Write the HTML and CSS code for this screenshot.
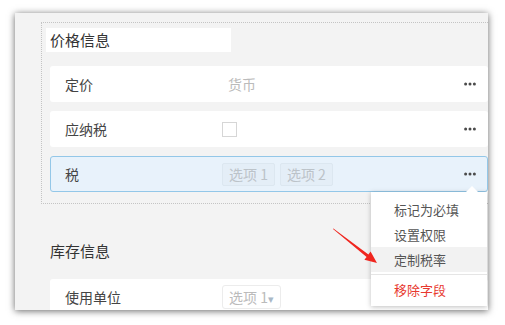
FILE: index.html
```html
<!DOCTYPE html>
<html lang="zh-CN">
<head>
  <meta charset="UTF-8">
  <title>字段设置</title>
  <link rel="stylesheet" href="styles.css">
</head>
<body>
  <div class="frame">
    <div class="group">
      <div class="group-title">价格信息</div>
      <div class="field">
        <span class="label">定价</span>
        <span class="value"><span class="placeholder">货币</span></span>
        <svg class="more" width="12" height="4" viewBox="0 0 12 4"><circle cx="1.6" cy="2" r="1.5"/><circle cx="6" cy="2" r="1.5"/><circle cx="10.4" cy="2" r="1.5"/></svg>
      </div>
      <div class="field">
        <span class="label">应纳税</span>
        <span class="value"><span class="checkbox"></span></span>
        <svg class="more" width="12" height="4" viewBox="0 0 12 4"><circle cx="1.6" cy="2" r="1.5"/><circle cx="6" cy="2" r="1.5"/><circle cx="10.4" cy="2" r="1.5"/></svg>
      </div>
      <div class="field active">
        <span class="label">税</span>
        <span class="value">
          <span class="tag">选项 1</span>
          <span class="tag">选项 2</span>
        </span>
        <svg class="more" width="12" height="4" viewBox="0 0 12 4"><circle cx="1.6" cy="2" r="1.5"/><circle cx="6" cy="2" r="1.5"/><circle cx="10.4" cy="2" r="1.5"/></svg>
      </div>
    </div>

    <div class="section-title">库存信息</div>
    <div class="field">
      <span class="label">使用单位</span>
      <span class="value"><span class="select">选项 1<span class="caret">▾</span></span></span>
    </div>

    <!-- ===== Field menu ===== -->
    <div class="menu">
      <div class="menu-item">标记为必填</div>
      <div class="menu-item">设置权限</div>
      <div class="menu-item hover">定制税率</div>
      <div class="menu-sep"></div>
      <div class="menu-item danger">移除字段</div>
    </div>
  </div>

  <svg class="arrow" width="505" height="325" viewBox="0 0 505 325">
    <polygon fill="#f0261f" points="333,229 366.6,257 364.4,259.8 377,263 370.6,251.6 368.4,254.5 333.4,228.4"/>
  </svg>
</body>
</html>
```

FILE: styles.css
```css
body {
  font-family: "Noto Sans CJK SC", "Noto Sans", sans-serif;
  background-color: #fff;
  margin: 0;
  width: 505px;
  height: 325px;
  overflow: hidden;
  position: relative;
}
.frame {
  position: relative;
  margin: 13px 0 0 15px;
  width: 473px;
  height: 297px;
  background-color: #f3f3f3;
  box-shadow: 0 1px 7px rgba(0, 0, 0, 0.6);
  overflow: hidden;
}
.group {
  margin: 9px -12px 0 26px;
  padding: 5px 0 11px 4px;
  border: 1px dotted #c4c4c4;
}
.group-title {
  width: 181px;
  height: 24px;
  line-height: 24px;
  padding-left: 4px;
  background-color: #fff;
  font-size: 15px;
  color: #333;
  margin-bottom: 14px;
}
.field {
  display: flex;
  align-items: center;
  height: 36px;
  background-color: #fff;
  border: 1px solid transparent;
  border-radius: 3px;
  margin: 0 0 9px 4px;
  box-sizing: border-box;
  width: 438px;
  padding: 0 11px 0 14px;
  font-size: 14px;
  color: #444;
}
.field.active {
  background-color: #e8f2fb;
  border-color: #93c7e8;
  margin-bottom: 0;
}
.label {
  width: 157px;
}
.value {
  flex-grow: 1;
  display: flex;
  align-items: center;
  gap: 5px;
}
.placeholder {
  padding-left: 6px;
  color: #bbb;
}
.checkbox {
  width: 13px;
  height: 13px;
  border: 1px solid #d6d6d6;
}
.tag {
  height: 23px;
  line-height: 21px;
  box-sizing: border-box;
  padding: 0 6px;
  border: 1px solid #dce7f0;
  background-color: #e4eef7;
  color: #bcc3c9;
  border-radius: 2px;
}
.more {
  fill: #4a4a4a;
}
.section-title {
  margin: 35px 0 0 35px;
  font-size: 15px;
  color: #333;
  height: 24px;
  line-height: 24px;
}
.frame > .field {
  margin: 16px 0 0 35px;
}
.select {
  height: 24px;
  line-height: 22px;
  box-sizing: border-box;
  padding: 0 6px;
  border: 1px solid #ececec;
  border-radius: 3px;
  color: #bbb;
}
.caret {
  font-size: 11px;
  color: #a9b8c6;
}
.menu {
  position: absolute;
  left: 356px;
  top: 179px;
  width: 116px;
  padding: 5px 0 4px;
  background-color: #fff;
  box-shadow: 0 1px 5px rgba(0, 0, 0, 0.25);
  font-size: 13px;
  color: #555;
}
.menu::before {
  content: "";
  position: absolute;
  top: -6px;
  left: 94px;
  border-left: 7px solid transparent;
  border-right: 7px solid transparent;
  border-bottom: 7px solid #fff;
}
.menu-item {
  height: 25px;
  line-height: 25px;
  padding-left: 23px;
}
.menu-item.hover {
  background-color: #f2f2f2;
}
.menu-sep {
  height: 1px;
  margin: 2px 0;
  background-color: #e5e5e5;
}
.menu-item.danger {
  color: #e8392f;
}
.arrow {
  position: absolute;
  left: 0;
  top: 0;
  pointer-events: none;
}
```
